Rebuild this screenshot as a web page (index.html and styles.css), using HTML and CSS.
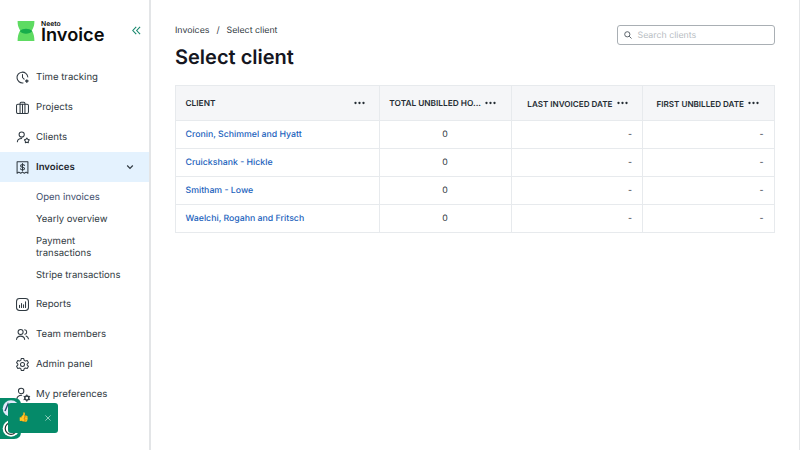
FILE: index.html
```html
<!DOCTYPE html>
<html lang="en">
<head>
<meta charset="utf-8">
<title>Select client</title>
<link rel="stylesheet" href="styles.css">
</head>
<body>
<div class="app">
  <aside class="sidebar">
    <header class="brand">
      <svg class="brand-mark" viewBox="0 0 18 20"><path d="M.6 0h16.800c0 4-.6 6-2.500 9.500C16.800 13 17.400 16 17.400 20H.6c0-4 .6-7 2.500-10.500C1.200 6 .6 4 .6 0z" fill="#5edb62"/><path d="M2.800 10.200c3-3.200 9.400-3.200 12.400 0-2.400 3.300-10 3.300-12.400 0z" fill="#17ad4b"/></svg>
      <div class="brand-text"><span class="brand-top">Neeto</span><span class="brand-name">Invoice</span></div>
      <svg class="collapse" viewBox="0 0 10 10"><path d="M4.700.9.900 5l3.800 4.100M9 .9 5.200 5 9 9.100"/></svg>
    </header>
    <nav class="nav">
      <a class="item"><svg class="icon" viewBox="0 0 24 24"><path d="M21.800 11A10 10 0 1 0 13 22M12 6.500V12l3 3"/><path d="M20 16.300v4.400M17.800 18.500h4.400" stroke-width="2.600"/></svg><span>Time tracking</span></a>
      <a class="item"><svg class="icon" viewBox="0 0 24 24"><rect x="1" y="6" width="22" height="17" rx="2.500"/><path d="M7.500 23V4.500a2 2 0 0 1 2-2h5a2 2 0 0 1 2 2V23M12 6v17"/></svg><span>Projects</span></a>
      <a class="item"><svg class="icon" viewBox="0 0 24 24"><circle cx="10.500" cy="6.500" r="4.800"/><path d="M2.500 20c.4-4 3-6 8-6M20 13l1.700 2.400 2.800.9-1.800 2.400v3L20 20.800l-2.700.9v-3l-1.800-2.400 2.800-.9z"/></svg><span>Clients</span></a>
      <a class="item active"><svg class="icon" viewBox="0 0 24 24"><path d="M2 1.500h20V22.500l-3.300-2-3.300 2-3.400-2-3.300 2-3.400-2L2 22.500zM15.500 8.300c-.5-1.200-1.800-1.800-3.500-1.800-2 0-3.500.8-3.500 2.500 0 3.600 7.200 1.400 7.200 5 0 1.700-1.600 2.500-3.700 2.500-1.900 0-3.300-.7-3.800-2M12 4.800v13.400"/></svg><span>Invoices</span><svg class="chevron" viewBox="0 0 8 8"><path d="m1.200 2.500 2.800 2.800 2.800-2.800"/></svg></a>
      <div class="sub">
        <a class="current">Open invoices</a>
        <a>Yearly overview</a>
        <a>Payment<br>transactions</a>
        <a>Stripe transactions</a>
      </div>
      <a class="item"><svg class="icon" viewBox="0 0 24 24"><rect x="1" y="1" width="22" height="22" rx="5.500"/><path d="M6.500 13.500v4M10.200 10v7.500M13.900 12.500v5M17.600 7v10.500"/></svg><span>Reports</span></a>
      <a class="item"><svg class="icon" viewBox="0 0 24 24"><circle cx="8.500" cy="7.500" r="4.700"/><path d="M1 21c.7-4.500 3.400-6 7.500-6s6.800 1.500 7.500 6M16 3.300c5 .4 5 7.500.4 8.400M18.500 14.800c2.500.8 4 2.500 4.500 5.200"/></svg><span>Team members</span></a>
      <a class="item"><svg class="icon" viewBox="0 0 24 24"><path d="M9.700 1h4.600l.8 3.400 2.200 1.300 3.400-1 2.300 4-2.500 2.500v1.600l2.500 2.500-2.300 4-3.400-1-2.200 1.300-.8 3.400H9.700l-.8-3.400-2.200-1.300-3.400 1-2.300-4 2.500-2.500v-1.600L1 8.700l2.300-4 3.400 1 2.200-1.300z"/><circle cx="12" cy="12" r="3.700"/></svg><span>Admin panel</span></a>
      <a class="item"><svg class="icon" viewBox="0 0 24 24"><circle cx="9.500" cy="5.500" r="5"/><path d="M1.500 21c.4-5 3.500-7.500 9-7.500"/><circle cx="20" cy="18.500" r="3.800" stroke-width="2.600"/><path d="M20 12.500v2M20 22.500v2M14.800 15.500l1.600 1M23.600 20.500l1.600 1M25.200 15.500l-1.600 1M16.400 20.500l-1.600 1"/></svg><span>My preferences</span></a>
    </nav>
  </aside>
  <main class="main">
    <header class="top">
      <div>
        <div class="crumbs"><span>Invoices</span><span>/</span><span>Select client</span></div>
        <h1>Select client</h1>
      </div>
      <label class="search"><svg viewBox="0 0 8 8"><circle cx="3.300" cy="3.300" r="2.600"/><path d="m5.200 5.200 2.300 2.300"/></svg><span>Search clients</span></label>
    </header>
    <table>
      <colgroup><col class="c1"><col class="c2"><col class="c3"><col class="c4"></colgroup>
      <thead><tr>
        <th><div class="head first"><span>CLIENT</span><svg class="dots" viewBox="0 0 11 4"><circle cx="1.500" cy="2" r="1.150"/><circle cx="5.500" cy="2" r="1.150"/><circle cx="9.500" cy="2" r="1.150"/></svg></div></th>
        <th><div class="head"><span>TOTAL UNBILLED HO...</span><svg class="dots" viewBox="0 0 11 4"><circle cx="1.500" cy="2" r="1.150"/><circle cx="5.500" cy="2" r="1.150"/><circle cx="9.500" cy="2" r="1.150"/></svg></div></th>
        <th><div class="head tight"><span>LAST INVOICED DATE</span><svg class="dots" viewBox="0 0 11 4"><circle cx="1.500" cy="2" r="1.150"/><circle cx="5.500" cy="2" r="1.150"/><circle cx="9.500" cy="2" r="1.150"/></svg></div></th>
        <th><div class="head tight"><span>FIRST UNBILLED DATE</span><svg class="dots" viewBox="0 0 11 4"><circle cx="1.500" cy="2" r="1.150"/><circle cx="5.500" cy="2" r="1.150"/><circle cx="9.500" cy="2" r="1.150"/></svg></div></th>
      </tr></thead>
      <tbody>
        <tr><td><a>Cronin, Schimmel and Hyatt</a></td><td class="num">0</td><td class="date">-</td><td class="date">-</td></tr>
        <tr><td><a>Cruickshank - Hickle</a></td><td class="num">0</td><td class="date">-</td><td class="date">-</td></tr>
        <tr><td><a>Smitham - Lowe</a></td><td class="num">0</td><td class="date">-</td><td class="date">-</td></tr>
        <tr><td><a>Waelchi, Rogahn and Fritsch</a></td><td class="num">0</td><td class="date">-</td><td class="date">-</td></tr>
      </tbody>
    </table>
  </main>
</div>
<div class="widget">
  <svg viewBox="0 0 21 41"><path d="M0 0h14q7 0 7 7v27q0 7-7 7H0z" fill="#058a69"/><circle cx="11" cy="10.500" r="8.300" fill="#dfeafa"/><circle cx="11" cy="30.500" r="8.300" fill="#fff"/><path d="m5 13 3-7 3 7" fill="none" stroke="#2d4770" stroke-width="1.400"/><circle cx="11" cy="30.500" r="5.800" fill="none" stroke="#26352f" stroke-width="1.200"/></svg>
</div>
<div class="toast"><span class="thumb">👍</span><svg class="close" viewBox="0 0 6 6"><path d="m.4.4 5.200 5.200M5.600.4.400 5.600"/></svg></div>
</body>
</html>
```
FILE: styles.css
```css
* { box-sizing: border-box; }
body { margin: 0; background: #fff; color: #2f3941; font-family: Inter, "Liberation Sans", sans-serif; font-size: 10px; text-rendering: geometricPrecision; }
svg { fill: none; flex: none; overflow: visible; }
.app { display: flex; height: 450px; overflow: hidden; border-right: 1px solid #e4e6e8; }
.sidebar { width: 151px; flex: none; border-right: 2px solid #e3e5e7; }
.brand { display: flex; height: 62px; padding: 20px 8px 0 17px; }
.brand-mark { width: 18px; height: 20px; margin-top: 1px; }
.brand-text { display: flex; flex-direction: column; margin-left: 6px; width: 64px; color: #0b0b0b; white-space: nowrap; }
.brand-top { font-size: 6.800px; font-weight: 600; line-height: 7px; }
.brand-name { font-size: 18.200px; font-weight: 600; line-height: 16px; }
.collapse { width: 9px; height: 9px; margin: 6px 0 0 27px; stroke: #15876c; stroke-width: 1.200; }
.item { display: flex; align-items: center; height: 30px; padding-left: 16px; }
.item span { margin-left: 7px; padding-top: 2px; line-height: 12px; font-size: 9.600px; }
.icon { width: 13px; height: 13px; stroke: #2f3941; stroke-width: 1.900; stroke-linejoin: round; stroke-linecap: round; }
.active { background: #e4f2fe; font-weight: 600; color: #1c252c; }
.chevron { width: 8px; height: 8px; margin-left: auto; margin-right: 15px; stroke: #2f3941; stroke-width: 1.200; }
.sub { display: flex; flex-direction: column; gap: 9.500px; padding: 9.500px 10px 6.500px 36px; }
.sub a { line-height: 12.500px; font-size: 9.500px; white-space: nowrap; }
.sub .current { color: #3d4d6b; }
.main { flex: 1; padding: 24px 24.500px 0 24px; }
.top { display: flex; justify-content: space-between; height: 61px; }
.crumbs { display: flex; gap: 7px; padding-top: 1px; font-size: 8.800px; line-height: 12px; }
h1 { margin: 6px 0 0; font-size: 20px; line-height: 28px; font-weight: 600; color: #151621; }
.search { display: flex; align-items: center; width: 157.500px; height: 20px; margin-top: 1px; padding-left: 5.500px; border: 1px solid #a9afb4; border-radius: 3px; font-size: 8.800px; color: #b7bcc2; }
.search svg { width: 8px; height: 8px; margin-right: 6px; stroke: #4d565e; stroke-width: .9; }
table { width: 599.500px; table-layout: fixed; border-collapse: collapse; font-size: 8.750px; line-height: 12px; }
.c1 { width: 204px; }
th, td { border: 1px solid #e7eaed; padding: 1px 10px 0 9.500px; }
th { height: 35px; background: #f5f6f8; padding-right: 14.500px; }
td { height: 28px; }
.head { display: flex; align-items: center; justify-content: flex-end; gap: 4px; font-size: 8.300px; font-weight: 600; white-space: nowrap; color: #252d34; }
.head span { padding-top: 1px; }
.first { justify-content: space-between; }
.tight { font-size: 8.100px; }
.dots { width: 11px; height: 4px; margin-top: -1px; fill: #252d34; }
td a { color: #1c63bd; font-weight: 500; }
.num { text-align: center; }
.date { text-align: right; }
.widget { position: absolute; left: 0; top: 398px; width: 21px; height: 41px; }
.widget svg { display: block; width: 21px; height: 41px; }
.toast { position: absolute; left: 7.500px; top: 402.500px; width: 50px; height: 30px; display: flex; align-items: center; justify-content: space-between; padding: 0 7px 0 10.500px; background: #058a69; border-radius: 3px; }
.thumb { font-size: 8.800px; line-height: 10px; }
.close { width: 6px; height: 6px; stroke: #c8e8de; stroke-width: .7; }
```
